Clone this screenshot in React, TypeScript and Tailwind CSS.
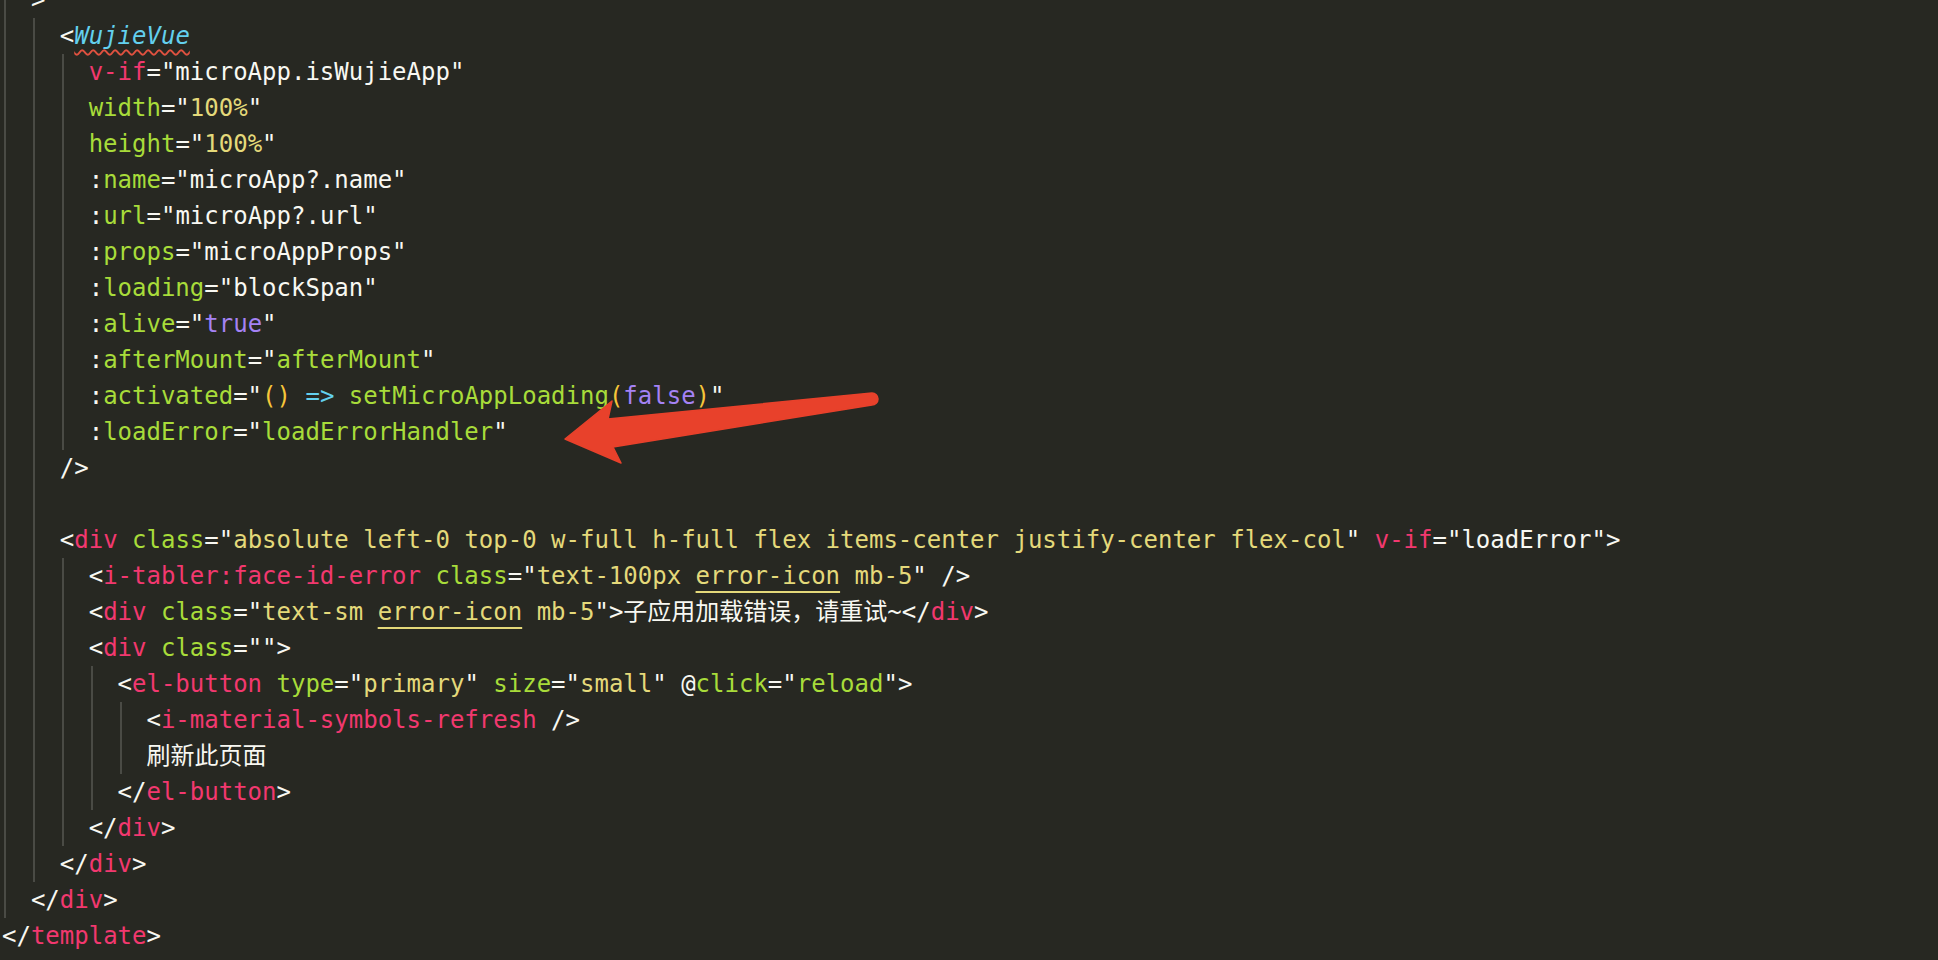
import React from "react"

const W = "text-[#f8f8f2]"
const P = "text-[#f2386f]"
const G = "text-[#a8dc3a]"
const Y = "text-[#e4d97a]"
const C = "text-[#63d0ee]"
const V = "text-[#a482f4]"
const B = "text-[#f6c63a]"

type Tok = [string, string] | [string, string, "u" | "wave"]

interface Line {
  indent: number
  toks: Tok[]
}

const lines: Line[] = [
  { indent: 1, toks: [[W, ">"]] },
  { indent: 2, toks: [[W, "<"], [C + " italic", "WujieVue", "wave"]] },
  { indent: 3, toks: [[P, "v-if"], [W, '="microApp.isWujieApp"']] },
  { indent: 3, toks: [[G, "width"], [W, '="'], [Y, "100%"], [W, '"']] },
  { indent: 3, toks: [[G, "height"], [W, '="'], [Y, "100%"], [W, '"']] },
  { indent: 3, toks: [[W, ":"], [G, "name"], [W, '="microApp?.name"']] },
  { indent: 3, toks: [[W, ":"], [G, "url"], [W, '="microApp?.url"']] },
  { indent: 3, toks: [[W, ":"], [G, "props"], [W, '="microAppProps"']] },
  { indent: 3, toks: [[W, ":"], [G, "loading"], [W, '="blockSpan"']] },
  { indent: 3, toks: [[W, ":"], [G, "alive"], [W, '="'], [V, "true"], [W, '"']] },
  { indent: 3, toks: [[W, ":"], [G, "afterMount"], [W, '="'], [G, "afterMount"], [W, '"']] },
  {
    indent: 3,
    toks: [
      [W, ":"], [G, "activated"], [W, '="'], [B, "()"], [W, " "], [C, "=>"], [W, " "],
      [G, "setMicroAppLoading"], [B, "("], [V, "false"], [B, ")"], [W, '"'],
    ],
  },
  { indent: 3, toks: [[W, ":"], [G, "loadError"], [W, '="'], [G, "loadErrorHandler"], [W, '"']] },
  { indent: 2, toks: [[W, "/>"]] },
  { indent: 2, toks: [] },
  {
    indent: 2,
    toks: [
      [W, "<"], [P, "div"], [W, " "], [G, "class"], [W, '="'],
      [Y, "absolute left-0 top-0 w-full h-full flex items-center justify-center flex-col"],
      [W, '" '], [P, "v-if"], [W, '="loadError">'],
    ],
  },
  {
    indent: 3,
    toks: [
      [W, "<"], [P, "i-tabler:face-id-error"], [W, " "], [G, "class"], [W, '="'],
      [Y, "text-100px "], [Y, "error-icon", "u"], [Y, " mb-5"], [W, '" />'],
    ],
  },
  {
    indent: 3,
    toks: [
      [W, "<"], [P, "div"], [W, " "], [G, "class"], [W, '="'], [Y, "text-sm "],
      [Y, "error-icon", "u"], [Y, " mb-5"], [W, '">子应用加载错误，请重试~</'], [P, "div"], [W, ">"],
    ],
  },
  { indent: 3, toks: [[W, "<"], [P, "div"], [W, " "], [G, "class"], [W, '="">']] },
  {
    indent: 4,
    toks: [
      [W, "<"], [P, "el-button"], [W, " "], [G, "type"], [W, '="'], [Y, "primary"], [W, '" '],
      [G, "size"], [W, '="'], [Y, "small"], [W, '" @'], [G, "click"], [W, '="'], [G, "reload"], [W, '">'],
    ],
  },
  { indent: 5, toks: [[W, "<"], [P, "i-material-symbols-refresh"], [W, " />"]] },
  { indent: 5, toks: [[W, "刷新此页面"]] },
  { indent: 4, toks: [[W, "</"], [P, "el-button"], [W, ">"]] },
  { indent: 3, toks: [[W, "</"], [P, "div"], [W, ">"]] },
  { indent: 2, toks: [[W, "</"], [P, "div"], [W, ">"]] },
  { indent: 1, toks: [[W, "</"], [P, "div"], [W, ">"]] },
  { indent: 0, toks: [[W, "</"], [P, "template"], [W, ">"]] },
]

function CodeLine({ line }: { line: Line }) {
  return (
    <div className="flex h-[36px] leading-[36px] whitespace-pre">
      {Array.from({ length: line.indent }).map((_, i) => (
        <span key={i} className="w-[2ch] shrink-0 self-stretch">
          <span className="block ml-[2px] w-[2px] h-full bg-[#4a4b45]" />
        </span>
      ))}
      <span>
        {line.toks.map(([cls, text, deco], i) => (
          <span
            key={i}
            className={
              cls +
              (deco === "u"
                ? " underline decoration-[#e4d97a] decoration-2 underline-offset-[7px]"
                : deco === "wave"
                ? " underline decoration-wavy decoration-[#e0513f] decoration-2 underline-offset-[5px]"
                : "")
            }
          >
            {text}
          </span>
        ))}
      </span>
    </div>
  )
}

export default function App() {
  return (
    <div className="relative h-[960px] w-full overflow-hidden bg-[#272822] font-['DejaVu_Sans_Mono','Noto_Sans_CJK_SC',monospace] text-[24px]">
      <div className="mt-[-18px] pl-[2px]">
        {lines.map((line, i) => (
          <CodeLine key={i} line={line} />
        ))}
      </div>

      {/* annotation arrow */}
      <svg className="absolute left-0 top-0 pointer-events-none" width="1938" height="960" viewBox="0 0 1938 960">
        <path
          d="M565 439 L612 401 L608 419 L872 393 A6 6 0 0 1 872 405 L613 447 L621 463 Z"
          fill="#e8412b"
          stroke="#e8412b"
          strokeWidth="1.5"
          strokeLinejoin="round"
        />
      </svg>
    </div>
  )
}
